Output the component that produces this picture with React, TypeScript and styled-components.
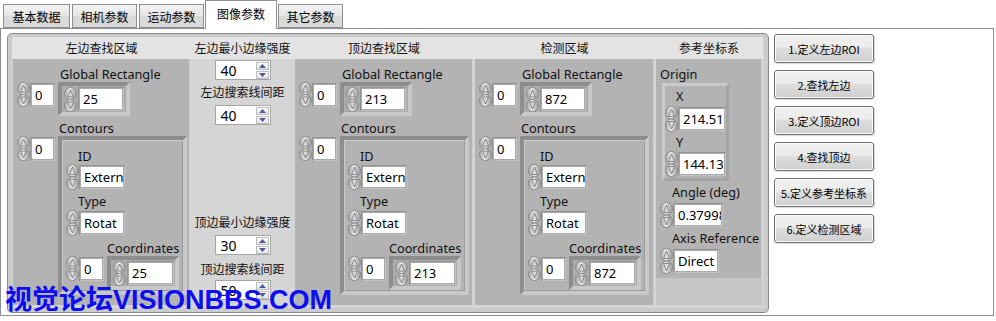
import styled, { createGlobalStyle } from 'styled-components';

const GlobalStyle = createGlobalStyle`
  html, body {
    margin: 0;
    padding: 0;
    background: #fff;
  }
  body {
    font-family: "Noto Sans", "Noto Sans CJK SC", sans-serif;
    font-size: 13px;
    color: #111;
  }
  * { box-sizing: border-box; }
`;

const Page = styled.div`
  position: relative;
  width: 996px;
  height: 321px;
  overflow: hidden;
  background: #fff;
`;

const TabBar = styled.div`
  position: relative;
  z-index: 1;
  display: flex;
  align-items: flex-end;
  gap: 2px;
  height: 28px;
  padding-left: 3px;
`;

const Tab = styled.div<{ $w: number; $active?: boolean }>`
  width: ${({ $w }) => $w}px;
  height: ${({ $active }) => ($active ? 29 : 24)}px;
  margin: 0 ${({ $active }) => ($active ? -1 : 0)}px ${({ $active }) => ($active ? -1 : 0)}px;
  border: 1px solid #8e8f8f;
  border-bottom: ${({ $active }) => ($active ? 'none' : '1px solid #8e8f8f')};
  background: ${({ $active }) => ($active ? '#fff' : 'linear-gradient(#f3f3f3, #e6e6e6 50%, #dadada 51%, #d9d9d9)')};
  font-family: "Noto Sans CJK SC", sans-serif;
  font-size: 12px;
  color: #000;
  display: flex;
  align-items: center;
  justify-content: center;
  padding-bottom: ${({ $active }) => ($active ? 3 : 0)}px;
`;

const TabPanel = styled.div`
  display: flex;
  align-items: flex-start;
  width: 994px;
  height: 288px;
  border: 1px solid #898c95;
  padding: 4px 0 0 6px;
`;

const OuterCluster = styled.div`
  width: 762px;
  height: 280px;
  border: 1px solid #8a8a8a;
  border-radius: 5px;
  background: #cbcbcb;
  padding: 3px 4px 4px;
`;

const ClusterInner = styled.div`
  display: flex;
  height: 100%;
  background: #d5d5d5;
`;

const Column = styled.div<{ $w: number }>`
  display: flex;
  flex-direction: column;
  align-items: ${({ $w }) => ($w < 110 ? 'center' : 'stretch')};
  width: ${({ $w }) => $w}px;
`;

const ColumnTitle = styled.div`
  align-self: stretch;
  height: 22px;
  line-height: 22px;
  background: #e3e3e3;
  text-align: center;
  font-family: "Noto Sans CJK SC", sans-serif;
  font-size: 12px;
  color: #111;
  white-space: nowrap;
`;

const DarkPanel = styled.div<{ $h: number }>`
  align-self: stretch;
  height: ${({ $h }) => $h}px;
  margin: 0 1px;
  background: #b3b3b3;
  border-right: 1px solid #cfcfcf;
  padding: 7px 0 0 4px;
  display: flex;
  flex-direction: column;
`;

const PanelFoot = styled.div`
  align-self: stretch;
  flex: 1;
  margin: 0 1px 3px;
  background: #c6c6c6;
`;

const Label = styled.div<{ $indent?: number; $mt?: number; $cjk?: boolean }>`
  height: 16px;
  line-height: 16px;
  margin-top: ${({ $mt }) => $mt ?? 0}px;
  padding-left: ${({ $indent }) => $indent ?? 0}px;
  font-family: ${({ $cjk }) => ($cjk ? '"Noto Sans CJK SC", sans-serif' : '"Noto Sans", sans-serif')};
  font-size: ${({ $cjk }) => ($cjk ? 12 : 12.7)}px;
  white-space: nowrap;
  color: #111;
`;

const Row = styled.div<{ $mt?: number; $gap?: number }>`
  display: flex;
  align-items: flex-start;
  gap: ${({ $gap }) => $gap ?? 3}px;
  margin-top: ${({ $mt }) => $mt ?? 0}px;
`;

const ControlRow = styled.div<{ $mt?: number }>`
  display: flex;
  align-items: center;
  margin-top: ${({ $mt }) => $mt ?? 0}px;
`;

const ValueFrame = styled.div`
  padding: 2px;
  background: #a9a9a9;
  box-shadow: inset 1px 1px 0 #949494, inset -1px -1px 0 #c2c2c2;
`;

const ValueBox = styled.div<{ $w: number }>`
  width: ${({ $w }) => $w}px;
  height: 20px;
  line-height: 20px;
  background: #fff;
  padding-left: 3px;
  font-family: "Noto Sans", sans-serif;
  font-size: 13px;
  color: #000;
  white-space: nowrap;
  overflow: hidden;
`;

const ArrayFrame = styled.div<{ $w: number; $h: number }>`
  width: ${({ $w }) => $w}px;
  height: ${({ $h }) => $h}px;
  border: 4px solid;
  border-color: #8d8d8d #c8c8c8 #c8c8c8 #8d8d8d;
  background: #acacac;
  display: flex;
  align-items: center;
  gap: 1px;
  padding: 0 2px;
`;

const ContoursFrame = styled.div`
  width: 129px;
  height: 159px;
  border: 4px solid;
  border-color: #8d8d8d #c8c8c8 #c8c8c8 #8d8d8d;
  background: #acacac;
`;

const InnerCluster = styled.div`
  height: 100%;
  background: #b3b3b3;
  border: 1px solid;
  border-color: #c9c9c9 #9c9c9c #9c9c9c #c9c9c9;
  padding: 6px 0 0 3px;
  display: flex;
  flex-direction: column;
`;

const OriginFrame = styled.div`
  width: 67px;
  height: 98px;
  margin: 1px 0 0 2px;
  border: 3px solid;
  border-color: #cacaca #a4a4a4 #a4a4a4 #cacaca;
  background: #b3b3b3;
  padding: 2px 0 0 0;
  display: flex;
  flex-direction: column;
`;

const SysBox = styled.div<{ $mt?: number }>`
  width: 56px;
  height: 20px;
  margin-top: ${({ $mt }) => $mt ?? 0}px;
  border: 1px solid #a6a6a6;
  background: #fff;
  display: flex;
  align-items: center;
  justify-content: space-between;
  padding: 0 1px 0 5px;
  font-family: "Noto Sans", sans-serif;
  font-size: 14px;
  color: #000;
`;

const SysArrows = styled.div`
  display: flex;
  flex-direction: column;
  gap: 1px;
`;

const SysArrow = styled.div`
  width: 13px;
  height: 8px;
  border: 1px solid #bcbcbc;
  background: linear-gradient(#fbfbfb, #e4e4e4);
  display: flex;
  align-items: center;
  justify-content: center;
`;

const ButtonColumn = styled.div`
  display: flex;
  flex-direction: column;
  gap: 7px;
  margin: 1px 0 0 5px;
`;

const ActionButton = styled.button`
  width: 100px;
  height: 29px;
  border: 1px solid #707070;
  border-radius: 3px;
  background: linear-gradient(#f2f2f2, #ebebeb 45%, #dddddd 50%, #cfcfcf);
  box-shadow: inset 0 0 0 1px #fcfcfc, 1px 1px 1px rgba(0, 0, 0, 0.15);
  font-family: "Noto Sans CJK SC", sans-serif;
  font-size: 11px;
  color: #000;
  padding: 0;
  white-space: nowrap;
`;

const Watermark = styled.div`
  position: absolute;
  left: 5px;
  top: 284px;
  font-family: "Liberation Sans", "Noto Sans CJK SC", sans-serif;
  font-weight: bold;
  font-size: 27px;
  line-height: 32px;
  color: #0d0df2;
  white-space: nowrap;
`;

function Spinner({ h = 25 }: { h?: number }) {
  const m = h / 2;
  return (
    <svg width={13} height={h} viewBox={`0 0 13 ${h}`} style={{ flex: 'none' }}>
      <defs>
        <linearGradient id="spinFill" x1="0" x2="1" y1="0" y2="0">
          <stop offset="0" stopColor="#a3a3a3" />
          <stop offset="0.45" stopColor="#ececec" />
          <stop offset="1" stopColor="#989898" />
        </linearGradient>
      </defs>
      <rect x="0.5" y="0.5" width="12" height={m - 0.5} rx="6" fill="url(#spinFill)" stroke="#8a8a8a" />
      <rect x="0.5" y={m} width="12" height={m - 0.5} rx="6" fill="url(#spinFill)" stroke="#8a8a8a" />
      <path d={`M6.5 3 L9.5 ${m - 2.5} H3.5 Z`} fill="#dcdcdc" stroke="#6f6f6f" strokeWidth="0.8" />
      <path d={`M6.5 ${h - 3} L9.5 ${m + 2.5} H3.5 Z`} fill="#dcdcdc" stroke="#6f6f6f" strokeWidth="0.8" />
    </svg>
  );
}

function SysTriangle({ down }: { down?: boolean }) {
  return (
    <svg width={7} height={4} viewBox="0 0 7 4">
      <path d={down ? 'M0 0 H7 L3.5 4 Z' : 'M0 4 H7 L3.5 0 Z'} fill="#4c5d9c" />
    </svg>
  );
}

function ClassicNumeric({ value, w, h = 26, mt }: { value: string; w: number; h?: number; mt?: number }) {
  return (
    <ControlRow $mt={mt}>
      <Spinner h={h} />
      <ValueFrame>
        <ValueBox $w={w}>{value}</ValueBox>
      </ValueFrame>
    </ControlRow>
  );
}

function IndexControl() {
  return (
    <ControlRow>
      <Spinner h={25} />
      <ValueFrame>
        <ValueBox $w={21}>0</ValueBox>
      </ValueFrame>
    </ControlRow>
  );
}

function SysNumeric({ value, mt }: { value: string; mt?: number }) {
  return (
    <SysBox $mt={mt}>
      <span>{value}</span>
      <SysArrows>
        <SysArrow><SysTriangle /></SysArrow>
        <SysArrow><SysTriangle down /></SysArrow>
      </SysArrows>
    </SysBox>
  );
}

function SearchArea({ value }: { value: string }) {
  return (
    <DarkPanel $h={246}>
      <Label $indent={43}>Global Rectangle</Label>
      <Row>
        <IndexControl />
        <ArrayFrame $w={72} $h={34}>
          <Spinner h={25} />
          <ValueFrame>
            <ValueBox $w={42}>{value}</ValueBox>
          </ValueFrame>
        </ArrayFrame>
      </Row>
      <Label $indent={42} $mt={4}>Contours</Label>
      <Row>
        <IndexControl />
        <ContoursFrame>
          <InnerCluster>
            <Label $indent={12} $mt={1}>ID</Label>
            <ClassicNumeric value="Extern" w={42} />
            <Label $indent={12} $mt={3}>Type</Label>
            <ClassicNumeric value="Rotat" w={42} mt={1} />
            <Label $indent={41} $mt={4}>Coordinates</Label>
            <Row>
              <IndexControl />
              <ArrayFrame $w={72} $h={34}>
                <Spinner h={25} />
                <ValueFrame>
                  <ValueBox $w={43}>{value}</ValueBox>
                </ValueFrame>
              </ArrayFrame>
            </Row>
          </InnerCluster>
        </ContoursFrame>
      </Row>
    </DarkPanel>
  );
}

const tabs = [
  { name: '基本数据', w: 67 },
  { name: '相机参数', w: 65 },
  { name: '运动参数', w: 65 },
  { name: '图像参数', w: 72, active: true },
  { name: '其它参数', w: 65 },
];

const buttons = ['1.定义左边ROI', '2.查找左边', '3.定义顶边ROI', '4.查找顶边', '5.定义参考坐标系', '6.定义检测区域'];

export default function App() {
  return (
    <Page>
      <GlobalStyle />
      <TabBar>
        {tabs.map((t) => (
          <Tab key={t.name} $w={t.w} $active={t.active}>{t.name}</Tab>
        ))}
      </TabBar>
      <TabPanel>
        <OuterCluster>
          <ClusterInner>
            <Column $w={179}>
              <ColumnTitle>左边查找区域</ColumnTitle>
              <SearchArea value="25" />
            </Column>
            <Column $w={103}>
              <ColumnTitle>左边最小边缘强度</ColumnTitle>
              <SysNumeric value="40" mt={1} />
              <Label $cjk $mt={4}>左边搜索线间距</Label>
              <SysNumeric value="40" mt={5} />
              <Label $cjk $mt={89}>顶边最小边缘强度</Label>
              <SysNumeric value="30" mt={5} />
              <Label $cjk $mt={6}>顶边搜索线间距</Label>
              <SysNumeric value="50" mt={3} />
            </Column>
            <Column $w={180}>
              <ColumnTitle>顶边查找区域</ColumnTitle>
              <SearchArea value="213" />
            </Column>
            <Column $w={181}>
              <ColumnTitle>检测区域</ColumnTitle>
              <SearchArea value="872" />
            </Column>
            <Column $w={108}>
              <ColumnTitle>参考坐标系</ColumnTitle>
              <DarkPanel $h={219}>
                <Label>Origin</Label>
                <OriginFrame>
                  <Label $indent={11}>X</Label>
                  <ClassicNumeric value="214.511" w={44} mt={2} />
                  <Label $indent={11} $mt={2}>Y</Label>
                  <ClassicNumeric value="144.136" w={44} mt={1} />
                </OriginFrame>
                <Label $indent={12} $mt={3}>Angle (deg)</Label>
                <ClassicNumeric value="0.37998" w={46} mt={2} />
                <Label $indent={12} $mt={2}>Axis Reference</Label>
                <ClassicNumeric value="Direct" w={42} mt={2} />
              </DarkPanel>
              <PanelFoot />
            </Column>
          </ClusterInner>
        </OuterCluster>
        <ButtonColumn>
          {buttons.map((b) => (
            <ActionButton key={b}>{b}</ActionButton>
          ))}
        </ButtonColumn>
      </TabPanel>
      <Watermark>视觉论坛VISIONBBS.COM</Watermark>
    </Page>
  );
}
